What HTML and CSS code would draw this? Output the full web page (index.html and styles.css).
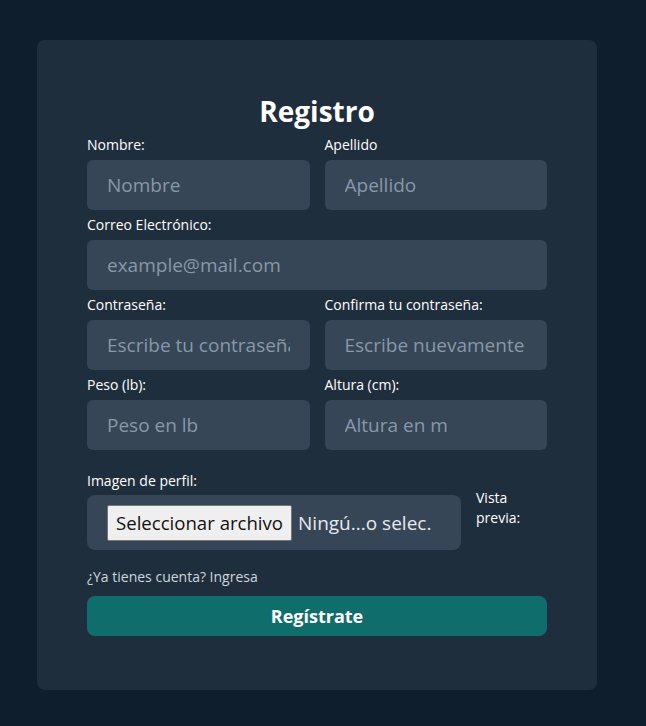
FILE: index.html
```html
<!DOCTYPE html>
<html lang="es">
<head>
<meta charset="utf-8">
<title>Registro</title>
<link rel="stylesheet" href="styles.css">
</head>
<body>
<main class="page">
  <form class="card">
    <h1 class="title">Registro</h1>
    <div class="row two">
      <div class="field">
        <label class="label">Nombre:</label>
        <input class="input" type="text" placeholder="Nombre">
      </div>
      <div class="field">
        <label class="label">Apellido</label>
        <input class="input" type="text" placeholder="Apellido">
      </div>
    </div>
    <div class="row">
      <div class="field">
        <label class="label">Correo Electrónico:</label>
        <input class="input" type="email" placeholder="example@mail.com">
      </div>
    </div>
    <div class="row two">
      <div class="field">
        <label class="label">Contraseña:</label>
        <input class="input" type="password" placeholder="Escribe tu contraseña">
      </div>
      <div class="field">
        <label class="label">Confirma tu contraseña:</label>
        <input class="input" type="password" placeholder="Escribe nuevamente">
      </div>
    </div>
    <div class="row two">
      <div class="field">
        <label class="label">Peso (lb):</label>
        <input class="input" type="text" placeholder="Peso en lb">
      </div>
      <div class="field">
        <label class="label">Altura (cm):</label>
        <input class="input" type="text" placeholder="Altura en m">
      </div>
    </div>
    <div class="row file-row">
      <div class="field file-field">
        <label class="label file-label">Imagen de perfil:</label>
        <div class="file-box">
          <span class="file-btn">Seleccionar archivo</span>
          <span class="file-name">Ningú...o selec.</span>
        </div>
      </div>
      <div class="preview">Vista previa:</div>
    </div>
    <p class="login">¿Ya tienes cuenta? Ingresa</p>
    <button class="submit" type="button">Regístrate</button>
  </form>
</main>
</body>
</html>
```
FILE: styles.css
```css
* { box-sizing: border-box; }
html, body { margin: 0; padding: 0; }
body {
  background: #0f1e2c;
  font-family: "Open Sans", "Noto Sans", sans-serif;
  color: #ffffff;
  min-height: 726px;
}
.page {
  padding: 40px 0 0 37px;
}
.card {
  width: 560px;
  height: 650px;
  background: #1f2e3d;
  border-radius: 8px;
  padding: 53px 50px 0 50px;
}
.title {
  margin: 0 0 6px 0;
  text-align: center;
  font-size: 28px;
  line-height: 36px;
  font-weight: 700;
}
.row {
  display: flex;
  gap: 15px;
}
.row .field { flex: 1 1 0; min-width: 0; }
.field {
  display: flex;
  flex-direction: column;
}
.label {
  font-size: 14px;
  line-height: 20px;
  margin-bottom: 5px;
  color: #ffffff;
  white-space: nowrap;
}
.input {
  height: 50px;
  border: none;
  border-radius: 6px;
  background: #364656;
  padding: 0 20px;
  font-family: inherit;
  font-size: 19px;
  color: #ffffff;
  outline: none;
  width: 100%;
}
.input::placeholder { color: #8898a8; }
.row + .row { margin-top: 5px; }
.row.file-row { margin-top: 21px; align-items: flex-start; }
.row .file-field { flex: 0 0 374px; }
.file-label { margin-bottom: 4px; }
.file-box {
  height: 55px;
  background: #364656;
  border-radius: 8px;
  display: flex;
  align-items: center;
  padding-left: 20px;
  gap: 6px;
}
.file-btn {
  background: #efefef;
  color: #111;
  border: 1px solid #767676;
  border-radius: 2px;
  height: 36px;
  padding: 0 8px;
  display: flex;
  align-items: center;
  font-size: 18.6px;
}
.file-name {
  font-size: 19px;
  color: #e6e9ee;
}
.preview {
  font-size: 14px;
  line-height: 20px;
  width: 60px;
  margin-top: 17px;
}
.login {
  margin: 17px 0 0 0;
  font-size: 14px;
  line-height: 20px;
  color: #cdd5de;
}
.submit {
  display: block;
  margin-top: 9px;
  width: 100%;
  height: 40px;
  border: none;
  border-radius: 8px;
  background: #0f6e6c;
  color: #ffffff;
  font-family: inherit;
  font-size: 18px;
  font-weight: 700;
}
```
